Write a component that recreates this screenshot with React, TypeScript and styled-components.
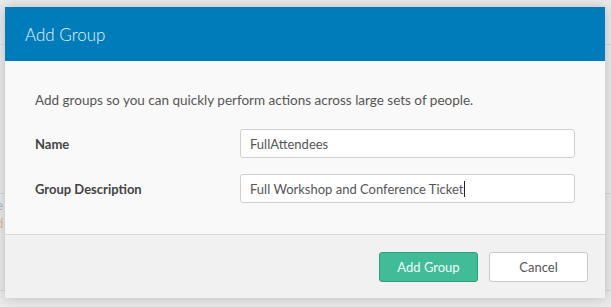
import React from "react";
import styled, { createGlobalStyle } from "styled-components";

const Global = createGlobalStyle`
  html, body { margin: 0; padding: 0; }
  body {
    background: #ebebeb;
    font-family: Lato, "Open Sans", "Liberation Sans", sans-serif;
    -webkit-font-smoothing: antialiased;
  }
`;

const Page = styled.div`
  position: relative;
  width: 611px;
  height: 307px;
  overflow: hidden;
  background: #ebebeb;
`;

const Backdrop = styled.div`
  display: flex;
  flex-direction: column;
`;

const BgRow = styled.div<{ $h: number; $line?: boolean }>`
  height: ${(p) => p.$h}px;
  border-bottom: ${(p) => (p.$line ? "1px solid #d9d9d9" : "none")};
  display: flex;
  align-items: center;
  font-size: 13px;
  color: #bbb;
  padding-left: 0;
`;

const BgText = styled.span<{ $c: string }>`
  margin-left: -4px;
  color: ${(p) => p.$c};
`;

const Modal = styled.div`
  position: absolute;
  top: 7px;
  left: 5px;
  width: 600px;
  box-shadow: 0 0 12px rgba(0, 0, 0, 0.22);
  display: flex;
  flex-direction: column;
`;

const Header = styled.div`
  height: 54px;
  background: #007cba;
  display: flex;
  align-items: center;
  padding-left: 20px;
`;

const Title = styled.h2`
  margin: 0;
  font-size: 17px;
  font-weight: 300;
  color: #e6f3fa;
`;

const Body = styled.div`
  background: #f9f9f9;
  padding: 30px 30px 31px 30px;
  border-bottom: 1px solid #d9d9d9;
`;

const Intro = styled.p`
  margin: 0 0 20px 0;
  font-size: 13.5px;
  line-height: 18px;
  color: #555;
`;

const Field = styled.div`
  display: grid;
  grid-template-columns: 205px 1fr;
  align-items: center;
  & + & {
    margin-top: 16px;
  }
`;

const Label = styled.label`
  font-size: 13px;
  font-weight: 700;
  color: #444;
`;

const Input = styled.div`
  height: 29px;
  box-sizing: border-box;
  border: 1px solid #cfcfcf;
  border-radius: 3px;
  background: #fff;
  padding-left: 9px;
  display: flex;
  align-items: center;
  font-size: 13px;
  color: #555;
`;

const Caret = styled.span`
  display: inline-block;
  width: 1px;
  height: 16px;
  background: #222;
  margin-left: 1px;
`;

const Footer = styled.div`
  background: #f1f1f1;
  padding: 17px 17px 16px 0;
  display: flex;
  justify-content: flex-end;
  gap: 11px;
`;

const Button = styled.button<{ $primary?: boolean }>`
  width: 99px;
  height: 30px;
  box-sizing: border-box;
  border-radius: 3px;
  font-family: inherit;
  font-size: 13px;
  border: 1px solid ${(p) => (p.$primary ? "#2f9e7d" : "#c9c9c9")};
  background: ${(p) => (p.$primary ? "#40bd98" : "#fff")};
  color: ${(p) => (p.$primary ? "#f2fbf8" : "#555")};
  padding: 0;
`;

export default function App() {
  return (
    <>
      <Global />
      <Page>
        <Backdrop>
          <BgRow $h={16} />
          <BgRow $h={28} $line>
            <BgText $c="#c8c8c8">f</BgText>
          </BgRow>
          <BgRow $h={148} $line />
          <BgRow $h={22}>
            <BgText $c="#9ab8d0">e</BgText>
          </BgRow>
          <BgRow $h={14}>
            <BgText $c="#d9b9a0">d</BgText>
          </BgRow>
          <BgRow $h={60} $line />
        </Backdrop>
        <Modal>
          <Header>
            <Title>Add Group</Title>
          </Header>
          <Body>
            <Intro>Add groups so you can quickly perform actions across large sets of people.</Intro>
            <Field>
              <Label>Name</Label>
              <Input>FullAttendees</Input>
            </Field>
            <Field>
              <Label>Group Description</Label>
              <Input>
                Full Workshop and Conference Ticket
                <Caret />
              </Input>
            </Field>
          </Body>
          <Footer>
            <Button $primary>Add Group</Button>
            <Button>Cancel</Button>
          </Footer>
        </Modal>
      </Page>
    </>
  );
}
